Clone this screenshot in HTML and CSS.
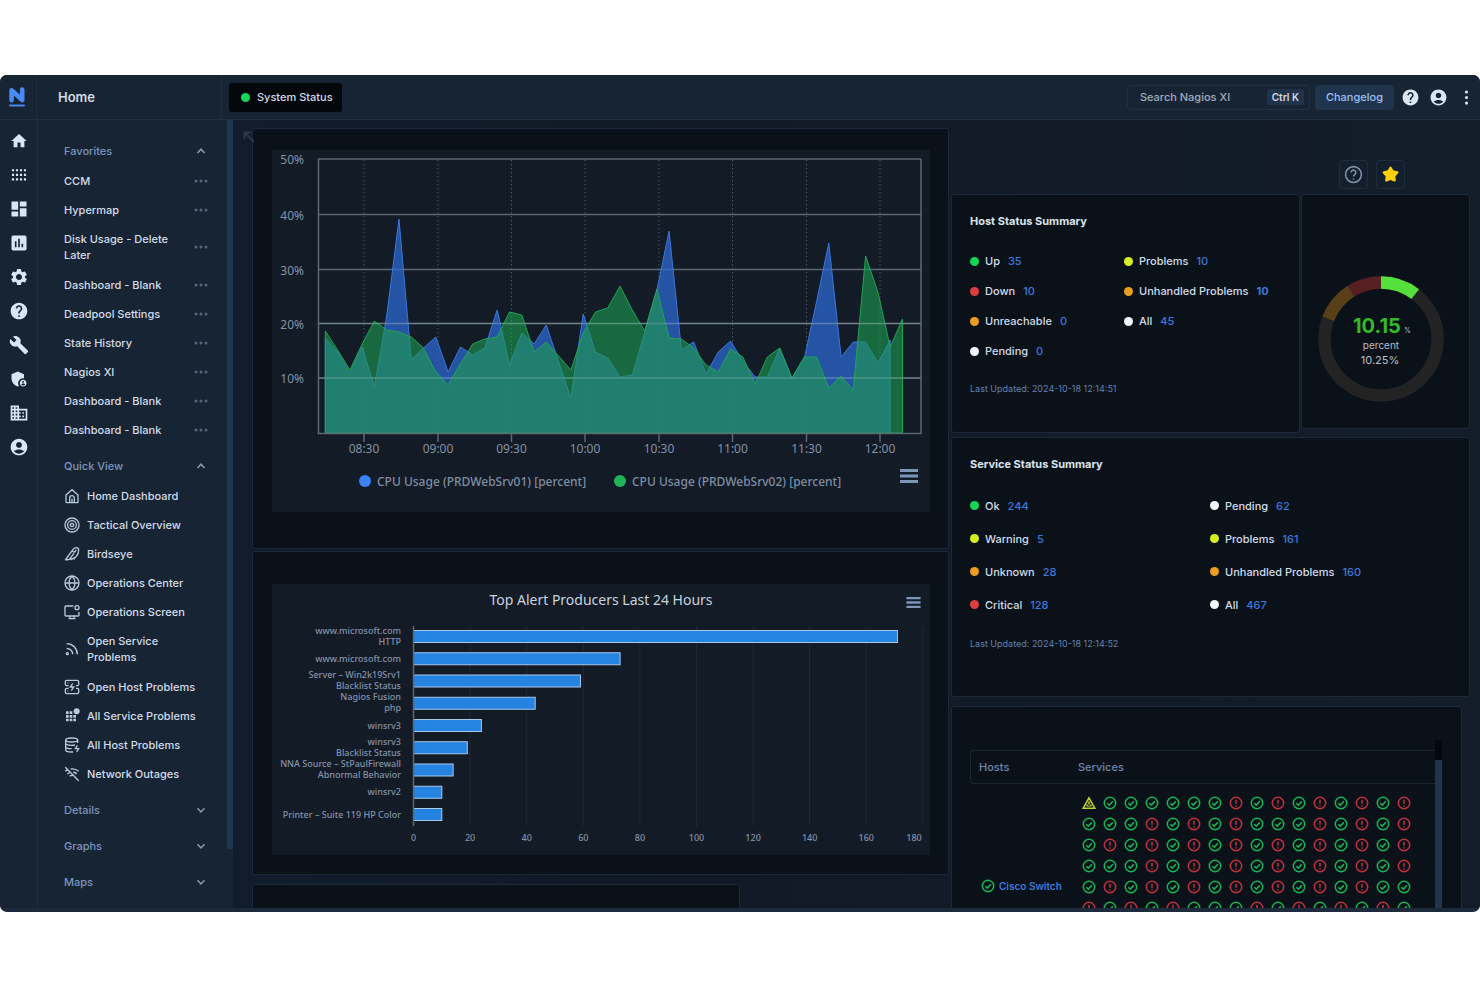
FILE: index.html
```html
<!DOCTYPE html>
<html lang="en">
<head>
<meta charset="utf-8">
<title>Nagios XI - Home</title>
<link rel="stylesheet" href="styles.css">
</head>
<body>
<svg class="sprite" aria-hidden="true">
  <symbol id="i-home" viewBox="-1 -1 26 26"><path d="M10 20v-6h4v6h5v-8h3L12 3 2 12h3v8z"/></symbol>
  <symbol id="i-apps" viewBox="0 0 24 24"><path d="M3.500 5h2.600v2.600H3.500zM8.300 5h2.600v2.600H8.300zM13.100 5h2.600v2.600h-2.600zM17.900 5h2.600v2.600h-2.600zM3.500 10.500h2.600v2.600H3.500zM8.300 10.500h2.600v2.600H8.300zM13.100 10.500h2.600v2.600h-2.600zM17.900 10.500h2.600v2.600h-2.600zM3.500 16h2.600v2.600H3.500zM8.300 16h2.600v2.600H8.300zM13.100 16h2.600v2.600h-2.600zM17.900 16h2.600v2.600h-2.600z"/></symbol>
  <symbol id="i-dashboard" viewBox="0 0 24 24"><path d="M3 13h8V3H3v10zm0 8h8v-6H3v6zm10 0h8V11h-8v10zm0-18v6h8V3h-8z"/></symbol>
  <symbol id="i-chart" viewBox="0 0 24 24"><path d="M19 3H5c-1.100 0-2 .9-2 2v14c0 1.100.9 2 2 2h14c1.100 0 2-.9 2-2V5c0-1.100-.9-2-2-2zM9 17H7v-7h2v7zm4 0h-2V7h2v10zm4 0h-2v-4h2v4z"/></symbol>
  <symbol id="i-gear" viewBox="0 0 24 24"><path d="M19.14 12.94c.04-.3.06-.61.06-.94 0-.32-.02-.64-.07-.94l2.03-1.58c.18-.14.23-.41.12-.61l-1.92-3.32c-.12-.22-.37-.29-.59-.22l-2.39.96c-.5-.38-1.03-.7-1.62-.94l-.36-2.54c-.04-.24-.24-.41-.48-.41h-3.84c-.24 0-.43.17-.47.41l-.36 2.54c-.59.24-1.13.57-1.62.94l-2.39-.96c-.22-.08-.47 0-.59.22L2.74 8.870c-.12.21-.08.47.12.61l2.03 1.580c-.05.3-.09.63-.09.94s.02.64.07.94l-2.03 1.580c-.18.14-.23.41-.12.61l1.920 3.320c.12.22.37.29.59.22l2.390-.96c.5.38 1.030.7 1.620.94l.36 2.540c.05.24.24.41.48.41h3.840c.24 0 .44-.17.47-.41l.36-2.540c.59-.24 1.130-.56 1.620-.94l2.390.96c.22.08.47 0 .59-.22l1.920-3.320c.12-.22.07-.47-.12-.61l-2.010-1.580zM12 15.600c-1.980 0-3.600-1.620-3.600-3.600s1.620-3.600 3.600-3.600 3.600 1.620 3.600 3.600-1.620 3.600-3.600 3.600z"/></symbol>
  <symbol id="i-help" viewBox="0 0 24 24"><path d="M12 2C6.480 2 2 6.480 2 12s4.480 10 10 10 10-4.480 10-10S17.520 2 12 2zm1 17h-2v-2h2v2zm2.070-7.750l-.9.92C13.450 12.900 13 13.500 13 15h-2v-.5c0-1.100.45-2.100 1.170-2.830l1.240-1.260c.37-.36.59-.86.59-1.410 0-1.100-.9-2-2-2s-2 .9-2 2H8c0-2.210 1.790-4 4-4s4 1.790 4 4c0 .88-.36 1.680-.93 2.250z"/></symbol>
  <symbol id="i-wrench" viewBox="0 0 24 24"><path d="M22.700 19l-9.100-9.100c.9-2.300.4-5-1.500-6.900-2-2-5-2.400-7.400-1.300L9 6 6 9 1.600 4.700C.4 7.100.9 10.100 2.900 12.100c1.900 1.900 4.600 2.400 6.900 1.500l9.100 9.100c.4.4 1 .4 1.400 0l2.300-2.300c.5-.4.5-1.100.1-1.400z"/></symbol>
  <symbol id="i-shield" viewBox="0 0 24 24"><path d="M17 11c.34 0 .67.04 1 .09V6.270L10.500 3 3 6.270v4.910c0 4.540 3.200 8.790 7.500 9.820.55-.13 1.080-.32 1.600-.55-.69-.98-1.100-2.170-1.100-3.450 0-3.310 2.690-6 6-6z"/><path fill-rule="evenodd" d="M17 13c-2.210 0-4 1.790-4 4s1.790 4 4 4 4-1.790 4-4-1.790-4-4-4zm0 1.380c.62 0 1.120.51 1.120 1.120s-.51 1.120-1.120 1.120-1.120-.51-1.120-1.120.5-1.120 1.120-1.120zm0 5.370c-.93 0-1.740-.46-2.240-1.170.05-.72 1.510-1.080 2.240-1.080s2.190.36 2.240 1.080c-.5.71-1.310 1.170-2.240 1.170z"/></symbol>
  <symbol id="i-building" viewBox="0 0 24 24"><path d="M12 7V3H2v18h20V7H12zM6 19H4v-2h2v2zm0-4H4v-2h2v2zm0-4H4V9h2v2zm0-4H4V5h2v2zm4 12H8v-2h2v2zm0-4H8v-2h2v2zm0-4H8V9h2v2zm0-4H8V5h2v2zm10 12h-8v-2h2v-2h-2v-2h2v-2h-2V9h8v10zm-2-8h-2v2h2v-2zm0 4h-2v2h2v-2z"/></symbol>
  <symbol id="i-user" viewBox="0 0 24 24"><path d="M12 2C6.480 2 2 6.480 2 12s4.480 10 10 10 10-4.480 10-10S17.520 2 12 2zm0 4c1.930 0 3.500 1.570 3.500 3.500S13.930 13 12 13s-3.500-1.570-3.500-3.500S10.070 6 12 6zm0 14c-2.030 0-4.430-.82-6.140-2.880C7.550 15.800 9.680 15 12 15s4.450.8 6.140 2.120C16.430 19.180 14.030 20 12 20z"/></symbol>
  <symbol id="i-more" viewBox="0 0 24 24"><circle cx="12" cy="5" r="2"/><circle cx="12" cy="12" r="2"/><circle cx="12" cy="19" r="2"/></symbol>
  <symbol id="i-dots" viewBox="0 0 14 4"><circle cx="2" cy="2" r="1.500"/><circle cx="7" cy="2" r="1.500"/><circle cx="12" cy="2" r="1.500"/></symbol>
  <symbol id="i-up" viewBox="0 0 10 10"><path d="M1.500 7 5 3.200 8.500 7"/></symbol>
  <symbol id="i-down" viewBox="0 0 10 10"><path d="M1.500 3.200 5 7 8.500 3.200"/></symbol>
  <symbol id="i-house" viewBox="0 0 24 24"><path d="M3 10.500 12 2.500l9 8V21a1 1 0 0 1-1 1H4a1 1 0 0 1-1-1zM8.500 22v-7a3.500 3.500 0 0 1 7 0v7M12 22v-6"/></symbol>
  <symbol id="i-target" viewBox="0 0 24 24"><circle cx="12" cy="12" r="10.500"/><circle cx="12" cy="12" r="6.500"/><circle cx="12" cy="12" r="2.500"/></symbol>
  <symbol id="i-bird" viewBox="0 0 24 24"><path d="M2 21 12.500 6.500C14 4 16 2.500 18.500 2.500c2.500 0 3.500 2 3.500 4C22 14 16 20 8 20M2 21l6-1 7-9M11 21l2-2.500M15 20l1.500-3M12.500 6.500c1 4 5 3 5.500-1"/></symbol>
  <symbol id="i-globe" viewBox="0 0 24 24"><circle cx="12" cy="12" r="10.500"/><path d="M1.500 12h21M12 1.500c-6 6-6 15 0 21M12 1.500c6 6 6 15 0 21"/></symbol>
  <symbol id="i-screen" viewBox="0 0 24 24"><path d="M14 3H3a1.500 1.500 0 0 0-1.500 1.500v12A1.500 1.500 0 0 0 3 18h18a1.500 1.500 0 0 0 1.500-1.500V12M7 22h10M9 18v4M15 18v4"/><circle cx="19.500" cy="5.500" r="3"/></symbol>
  <symbol id="i-rss" viewBox="0 0 24 24"><circle cx="5" cy="19" r="1.500"/><path d="M4 11a9 9 0 0 1 9 9M4 4a16 16 0 0 1 16 16"/></symbol>
  <symbol id="i-hostbolt" viewBox="0 0 24 24"><path d="M7 10H4a2 2 0 0 1-2-2V4a2 2 0 0 1 2-2h16a2 2 0 0 1 2 2v4a2 2 0 0 1-2 2h-2M7 14H4a2 2 0 0 0-2 2v4a2 2 0 0 0 2 2h16a2 2 0 0 0 2-2v-4a2 2 0 0 0-2-2h-2M13 6.500 9.500 12h5L11 17.500M5.500 6h1M5.500 18h1"/></symbol>
  <symbol id="i-gridalert" viewBox="0 0 24 24"><g fill="currentColor" stroke="none"><path d="M3 5h4v4H3zM8.500 5h4v4h-4zM3 10.500h4v4H3zM8.500 10.500h4v4h-4zM14 10.500h4v4h-4zM3 16h4v4H3zM8.500 16h4v4h-4zM14 16h4v4h-4z"/><circle cx="19" cy="5" r="4.500"/></g></symbol>
  <symbol id="i-dbbolt" viewBox="0 0 24 24"><ellipse cx="11.500" cy="4.500" rx="9" ry="3"/><path d="M2.500 4.500v15c0 1.700 4 3 9 3h2M20.500 4.500V9M2.500 9.500c0 1.700 4 3 9 3 2 0 3.500 0 5-.5M2.500 14.500c0 1.700 4 3 9 3M20 12.500 17 17.500h5l-3 5"/></symbol>
  <symbol id="i-wifioff" viewBox="0 0 24 24"><path d="M2 2l20 20M12 19h.01M8.500 15.500a5 5 0 0 1 5-1.300M5 12a10 10 0 0 1 4.500-2.500M2 8a15 15 0 0 1 3.500-2.500M10 4.500A15 15 0 0 1 22 8M14 9a10 10 0 0 1 5 3"/></symbol>
  <symbol id="i-ok" viewBox="0 0 14 14"><circle cx="7" cy="7" r="5.700"/><path d="M4.300 7.200 6.300 9.100 9.900 5.200"/></symbol>
  <symbol id="i-bad" viewBox="0 0 14 14"><circle cx="7" cy="7" r="5.700"/><path d="M7 3.800v4M7 9.200v1.200"/></symbol>
  <symbol id="i-warn" viewBox="0 0 14 14"><path d="M7 1.800 12.900 12.300H1.100zM7 5.200v3.200M7 9.600v1.200M5.200 8.500v2M8.800 8.500v2"/></symbol>
  <symbol id="i-burger" viewBox="0 0 18 14"><path d="M0 0h18v3H0zM0 5.500h18v3H0zM0 11h18v3H0z"/></symbol>
</svg>

<div class="app">
  <header class="topbar">
    <a class="brand" href="#" aria-label="Nagios">
      <svg width="18" height="20" viewBox="0 0 18 20"><path d="M3.600 13.200V3.200L14.200 13V2.500" fill="none" stroke="#4a8af4" stroke-width="4.600" stroke-linejoin="round" stroke-linecap="round"/><path d="M2 18.500h14" stroke="#4a8af4" stroke-width="1.800" stroke-linecap="round"/></svg>
    </a>
    <h1 class="page-name">Home</h1>
    <button class="system-status" type="button"><span class="dot green"></span>System Status</button>
    <div class="top-actions">
      <label class="search"><input type="text" placeholder="Search Nagios XI" aria-label="Search Nagios XI"><kbd>Ctrl K</kbd></label>
      <button class="changelog" type="button">Changelog</button>
      <button class="icon-btn" type="button" aria-label="Help"><svg><use href="#i-help"/></svg></button>
      <button class="icon-btn" type="button" aria-label="Account"><svg><use href="#i-user"/></svg></button>
      <button class="icon-btn" type="button" aria-label="More"><svg><use href="#i-more"/></svg></button>
    </div>
  </header>

  <div class="body">
    <nav class="rail" aria-label="Main">
      <a href="#" aria-label="Home"><svg><use href="#i-home"/></svg></a>
      <a href="#" aria-label="Views"><svg><use href="#i-apps"/></svg></a>
      <a href="#" aria-label="Dashboards"><svg><use href="#i-dashboard"/></svg></a>
      <a href="#" aria-label="Reports"><svg><use href="#i-chart"/></svg></a>
      <a href="#" aria-label="Configure"><svg><use href="#i-gear"/></svg></a>
      <a href="#" aria-label="Help"><svg><use href="#i-help"/></svg></a>
      <a href="#" aria-label="Tools"><svg><use href="#i-wrench"/></svg></a>
      <a href="#" aria-label="Admin"><svg><use href="#i-shield"/></svg></a>
      <a href="#" aria-label="Enterprise"><svg><use href="#i-building"/></svg></a>
      <a href="#" aria-label="Account"><svg><use href="#i-user"/></svg></a>
    </nav>

    <aside class="sidebar">
      <div class="menu">
        <button class="section" type="button">Favorites<svg><use href="#i-up"/></svg></button>
        <ul class="favorites">
          <li><a href="#">CCM</a><svg><use href="#i-dots"/></svg></li>
          <li><a href="#">Hypermap</a><svg><use href="#i-dots"/></svg></li>
          <li class="tall"><a href="#">Disk Usage - Delete Later</a><svg><use href="#i-dots"/></svg></li>
          <li><a href="#">Dashboard - Blank</a><svg><use href="#i-dots"/></svg></li>
          <li><a href="#">Deadpool Settings</a><svg><use href="#i-dots"/></svg></li>
          <li><a href="#">State History</a><svg><use href="#i-dots"/></svg></li>
          <li><a href="#">Nagios XI</a><svg><use href="#i-dots"/></svg></li>
          <li><a href="#">Dashboard - Blank</a><svg><use href="#i-dots"/></svg></li>
          <li><a href="#">Dashboard - Blank</a><svg><use href="#i-dots"/></svg></li>
        </ul>
        <button class="section" type="button">Quick View<svg><use href="#i-up"/></svg></button>
        <ul class="quick">
          <li><svg><use href="#i-house"/></svg><a href="#">Home Dashboard</a></li>
          <li><svg><use href="#i-target"/></svg><a href="#">Tactical Overview</a></li>
          <li><svg><use href="#i-bird"/></svg><a href="#">Birdseye</a></li>
          <li><svg><use href="#i-globe"/></svg><a href="#">Operations Center</a></li>
          <li><svg><use href="#i-screen"/></svg><a href="#">Operations Screen</a></li>
          <li class="tall"><svg><use href="#i-rss"/></svg><a href="#">Open Service<br>Problems</a></li>
          <li><svg><use href="#i-hostbolt"/></svg><a href="#">Open Host Problems</a></li>
          <li><svg><use href="#i-gridalert"/></svg><a href="#">All Service Problems</a></li>
          <li><svg><use href="#i-dbbolt"/></svg><a href="#">All Host Problems</a></li>
          <li><svg><use href="#i-wifioff"/></svg><a href="#">Network Outages</a></li>
        </ul>
        <button class="section" type="button">Details<svg><use href="#i-down"/></svg></button>
        <button class="section" type="button">Graphs<svg><use href="#i-down"/></svg></button>
        <button class="section" type="button">Maps<svg><use href="#i-down"/></svg></button>
      </div>
      <div class="side-scroll"><span></span></div>
    </aside>

    <main class="main">
      <svg class="resize" viewBox="0 0 12 12"><path d="M1.500 8V1.500H8M1.500 1.500 11 11"/></svg>
      <div class="col-left">
        <section class="panel cpu-panel">
          <svg class="chart" id="cpu" viewBox="272 150 658 362" role="img" aria-label="CPU usage">
            <g id="cpu-grid"></g>
            <path id="cpu-blue" class="area-blue"/>
            <path id="cpu-green" class="area-green"/>
            <g id="cpu-over"></g>
            <g id="cpu-labels" class="axis"></g>
            <circle cx="365" cy="481" r="6" fill="#3b82f6"/><text class="legend" x="377" y="486">CPU Usage (PRDWebSrv01) [percent]</text>
            <circle cx="620" cy="481" r="6" fill="#22b25a"/><text class="legend" x="632" y="486">CPU Usage (PRDWebSrv02) [percent]</text>
            <use href="#i-burger" x="900" y="469" width="18" height="14" class="burger"/>
          </svg>
        </section>
        <section class="panel alerts-panel">
          <svg class="chart" viewBox="272 584 658 271" role="img" aria-label="Top Alert Producers Last 24 Hours">
            <text class="chart-title" x="601" y="605">Top Alert Producers Last 24 Hours</text>
            <use href="#i-burger" x="906" y="597" width="15" height="11" class="burger"/>
            <g id="bars"></g>
          </svg>
        </section>
        <section class="panel empty-panel"></section>
      </div>

      <div class="col-right">
        <div class="tools">
          <button type="button" aria-label="Help"><svg viewBox="0 0 24 24" class="tool-help"><circle cx="12" cy="12" r="10"/><path d="M9 9.500a3 3 0 1 1 4.800 2.400c-1.100.8-1.800 1.400-1.800 2.600M12 17v1.500"/></svg></button>
          <button type="button" aria-label="Favorite"><svg viewBox="0 0 24 24" class="tool-star"><path d="M12 3.500l2.800 4.700 5.700 1.300-3.900 4.300.6 5.700L12 17.300l-5.200 2.200.6-5.700-3.900-4.300 5.700-1.300z"/></svg></button>
        </div>
        <div class="summary-row">
          <section class="panel summary host">
            <h2>Host Status Summary</h2>
            <ul>
              <li><span class="dot green"></span>Up<a href="#">35</a></li>
              <li><span class="dot red"></span>Down<a href="#">10</a></li>
              <li><span class="dot orange"></span>Unreachable<a href="#">0</a></li>
              <li><span class="dot white"></span>Pending<a href="#">0</a></li>
              <li><span class="dot yellow"></span>Problems<a href="#">10</a></li>
              <li><span class="dot orange"></span>Unhandled Problems<a class="strong" href="#">10</a></li>
              <li><span class="dot white"></span>All<a href="#">45</a></li>
            </ul>
            <p>Last Updated: 2024-10-18 12:14:51</p>
          </section>
          <section class="panel gauge">
            <svg viewBox="-64 -64 128 128" role="img" aria-label="10.15 percent">
              <g fill="none" stroke-width="12.500">
                <circle r="56.500" stroke="#222322"/>
                <path d="M-52.700 -20.200A56.500 56.500 0 0 1 -29.900 -47.900" stroke="#583f18"/>
                <path d="M-29.900 -47.900A56.500 56.500 0 0 1 0 -56.500" stroke="#571f22"/>
                <path d="M0 -56.500A56.500 56.500 0 0 1 34.200 -44.900" stroke="#55e13c"/>
              </g>
              <text class="g-value" x="-28" y="-6">10.15</text><text class="g-unit" x="23" y="-6">%</text>
              <text class="g-text" x="0" y="10">percent</text>
              <text class="g-pct" x="-1" y="25">10.25%</text>
            </svg>
          </section>
        </div>
        <section class="panel summary service">
          <h2>Service Status Summary</h2>
          <ul>
            <li><span class="dot green"></span>Ok<a href="#">244</a></li>
            <li><span class="dot yellow"></span>Warning<a href="#">5</a></li>
            <li><span class="dot orange"></span>Unknown<a href="#">28</a></li>
            <li><span class="dot red"></span>Critical<a href="#">128</a></li>
            <li><span class="dot white"></span>Pending<a href="#">62</a></li>
            <li><span class="dot yellow"></span>Problems<a href="#">161</a></li>
            <li><span class="dot orange"></span>Unhandled Problems<a href="#">160</a></li>
            <li><span class="dot white"></span>All<a href="#">467</a></li>
          </ul>
          <p>Last Updated: 2024-10-18 12:14:52</p>
        </section>
        <section class="panel hosts-panel">
          <table>
            <thead><tr><th>Hosts</th><th>Services</th></tr></thead>
            <tbody><tr>
              <td class="host-cell"><a href="#"><svg class="ok"><use href="#i-ok"/></svg>Cisco Switch</a></td>
              <td><div id="services" class="services"></div></td>
            </tr></tbody>
          </table>
          <div class="table-scroll"><span></span></div>
        </section>
      </div>
    </main>
  </div>
</div>
<script src="app.js"></script>
</body>
</html>
```
FILE: styles.css
```css
* { box-sizing: border-box; }
body { margin: 0; padding: 75px 0; background: #fff; font-family: Inter, "Liberation Sans", sans-serif; font-size: 12px; line-height: 16px; color: #d3dce8; }
ul { list-style: none; margin: 0; padding: 0; }
a { color: inherit; text-decoration: none; }
button { font: inherit; color: inherit; border: 0; background: none; padding: 0; }
h1, h2, p { margin: 0; }
.sprite { position: absolute; width: 0; height: 0; }

.app { height: calc(100vh - 150px); min-height: 600px; display: flex; flex-direction: column; overflow: hidden; border-radius: 7px; background: #111a26; border-bottom: 4px solid #1c2a3b; }

/* top bar */
.topbar { flex: 0 0 45px; display: flex; align-items: center; background: #172434; border-bottom: 1px solid #223044; }
.brand { flex: 0 0 37px; align-self: stretch; display: flex; align-items: center; padding-left: 8px; border-right: 1px solid #1f2d3f; }
.page-name { flex: 0 0 185px; align-self: stretch; padding-left: 21px; font-size: 13px; font-weight: 600; line-height: 44px; border-right: 1px solid #1f2d3f; }
.system-status { display: flex; align-items: center; gap: 7px; height: 29px; margin-left: 7px; padding: 0 9px 0 12px; background: #04070b; border-radius: 3px; font-size: 11px; font-weight: 500; }
.top-actions { display: flex; align-items: center; margin-left: auto; padding-right: 4px; }
.search { display: flex; align-items: center; width: 183px; height: 25px; padding: 0 5px 0 12px; border: 1px solid #213044; border-radius: 4px; }
.search input { flex: 1; min-width: 0; padding: 0; border: 0; background: none; font: inherit; font-size: 11px; font-weight: 500; color: #a9b5c4; outline: 0; }
.search input::placeholder { color: #a0acbc; opacity: 1; }
.search kbd { padding: 0 5px; border-radius: 3px; background: #21324a; font: inherit; font-size: 10px; font-weight: 600; }
.changelog { height: 25px; margin: 0 2px 0 5px; padding: 0 11px; border-radius: 4px; background: #21344e; color: #9cc0f2; font-size: 11px; font-weight: 500; }
.icon-btn { width: 28px; display: grid; place-items: center; }
.icon-btn svg, .rail svg { width: 20px; height: 20px; fill: #dbe6f3; }
.icon-btn svg { width: 19px; height: 19px; }
.icon-btn:last-child { width: 20px; margin-left: 4px; }

.body { flex: 1; min-height: 0; display: flex; }

/* icon rail */
.rail { flex: 0 0 38px; display: flex; flex-direction: column; align-items: center; gap: 14px; padding-top: 11px; background: #172434; border-right: 1px solid #1f2d3f; }
.rail a { display: block; height: 20px; }

/* sidebar */
.sidebar { flex: 0 0 195px; display: flex; overflow: hidden; background: #172434; }
.menu { flex: 1; padding: 13px 19px 0 26px; font-size: 11px; font-weight: 500; }
.section { display: flex; align-items: center; justify-content: space-between; width: 100%; height: 36px; color: #7d95bb; text-align: left; }
.section svg { width: 10px; height: 10px; margin-right: 2px; fill: none; stroke: #8b9bb0; stroke-width: 1.500; }
.menu li { display: flex; align-items: center; min-height: 29px; padding: 6px 0; line-height: 16px; }
.menu li.tall { padding: 7px 0; }
.favorites { margin: -3px 0 4px; }
.favorites a { flex: 1; padding-right: 20px; }
.favorites svg { width: 14px; height: 4px; fill: #56677d; }
.quick { margin: -3px 0 4px; }
.quick li { gap: 7px; }
.quick svg { flex: 0 0 16px; height: 16px; fill: none; stroke: #b9c9de; stroke-width: 2; color: #b9c9de; }
.side-scroll { flex: 0 0 6px; }
.side-scroll span { display: block; height: calc(100% - 59px); background: #203750; }

/* dashboard */
.main { flex: 1; min-width: 0; position: relative; display: flex; gap: 2px; padding: 0 10px 0 19px; background: linear-gradient(90deg, #111c2c, #111a26 40%, #131c29); overflow: hidden; }
.resize { position: absolute; left: 10px; top: 11px; width: 12px; height: 12px; fill: none; stroke: #2a374b; stroke-width: 2; }
.col-left { flex: 697 1 0; min-width: 0; padding-top: 8px; display: flex; flex-direction: column; gap: 2px; }
.col-right { flex: 519 1 0; min-width: 0; display: flex; flex-direction: column; }
.panel { flex: none; background: #0a1119; border: 1px solid #1c293a; border-radius: 3px; }
.chart { display: block; width: 100%; background: #121b26; font-family: "Noto Sans", sans-serif; }
.cpu-panel { padding: 21px 18px 36px 19px; }
.alerts-panel { padding: 32px 18px 19px 19px; }
.empty-panel { width: 70%; height: 60px; margin-top: 7px; }
.axis text { font-size: 12px; fill: #8492a6; }
.legend { font-size: 12px; font-weight: 500; fill: #7f8da3; }
.burger { fill: #7f95b5; }
.chart-title { font-size: 14px; fill: #c9d2dd; text-anchor: middle; }
.bar { fill: #2583e2; stroke: #a8c8ea; stroke-width: 1; }
.bar-label { font-size: 9px; font-weight: 500; fill: #8492ab; text-anchor: end; }
.tick { font-size: 9px; font-weight: 500; fill: #8492ab; text-anchor: middle; }
.area-blue { fill: #2d68cf; fill-opacity: 0.750; stroke: #3977dc; }
.area-green { fill: #1f9950; fill-opacity: 0.620; stroke: #22a356; }
.grid-line { stroke: #5d6874; stroke-width: 1.500; }
.grid-over { stroke: #8fb0b0; stroke-opacity: 0.350; stroke-width: 1.500; }
.grid-dot { stroke: #4a5663; stroke-dasharray: 1.500 2.500; }
.bar-grid { stroke: #1f2a38; }

.tools { display: flex; justify-content: flex-end; gap: 8px; padding: 40px 65px 5px 0; }
.tools button { display: grid; place-items: center; width: 29px; height: 29px; border: 1px solid #1f2c3e; border-radius: 3px; background: #141f2d; }
.tools svg { width: 19px; height: 19px; }
.tool-help { fill: none; stroke: #7f8fa8; stroke-width: 2; }
.tool-star { fill: #ffcf0a; stroke: #ffcf0a; stroke-width: 3; stroke-linejoin: round; }

.summary-row { display: grid; grid-template-columns: 349fr 169fr; align-items: start; gap: 1px; }
.gauge { display: flex; justify-content: center; padding: 80px 0 25px; }
.gauge svg { width: 128px; height: 128px; margin-left: -9px; }
.summary { padding: 18px 18px 0; }
.summary h2 { font-size: 11px; font-weight: 700; color: #dbe3ec; }
.summary ul { display: grid; grid-auto-flow: column; justify-content: start; }
.summary li { display: flex; align-items: center; font-size: 11px; font-weight: 500; }
.summary li .dot { margin-right: 6px; }
.summary li a { margin-left: 8px; color: #3f78dc; }
.summary li .strong { font-weight: 700; }
.summary p { font-size: 9px; color: #6480b0; }
.host ul { margin: 17px 0 15px; grid-template: repeat(4, 30px) / 154px auto; }
.host { height: 239px; }
.service { height: 260px; margin-top: 4px; }
.service ul { margin: 17px 0 15px; grid-template: repeat(4, 33px) / 240px auto; }
.dot { width: 9px; height: 9px; border-radius: 50%; }
.green { background: #12d658; }
.red { background: #d93f40; }
.orange { background: #eb9c21; }
.yellow { background: #d8f022; }
.white { background: #f2f5fa; }
.g-value { font-size: 20px; font-weight: 700; fill: #34b927; }
.g-unit { font-size: 7px; fill: #b9bfc6; }
.g-text { font-size: 10px; fill: #b9bfc6; text-anchor: middle; }
.g-pct { font-size: 11px; fill: #b9bfc6; text-anchor: middle; }

.hosts-panel { display: flex; align-items: flex-start; height: 260px; margin: 9px 8px 0 0; padding: 33px 19px 0 18px; }
table { flex: 1; margin-top: 10px; border-collapse: separate; border-spacing: 0; }
th { height: 34px; padding: 0 0 0 8px; border: 1px solid #1c2733; border-width: 1px 0; text-align: left; font-size: 11px; font-weight: 500; color: #6f86ad; }
th:first-child { width: 100px; border-left-width: 1px; border-radius: 4px 0 0 4px; }
td { padding: 8px 0 0 8px; }
.host-cell { padding: 0 0 22px 11px; vertical-align: bottom; font-size: 10px; font-weight: 600; color: #3f78dc; }
.host-cell a { display: flex; align-items: center; gap: 4px; height: 20px; }
.services { display: grid; grid-template-columns: repeat(16, 21px); grid-auto-rows: 21px; }
.services svg, .host-cell svg { width: 14px; height: 14px; fill: none; stroke-width: 1.500; place-self: center; }
.ok { stroke: #19b455; }
.bad { stroke: #c23140; }
.warn { stroke: #bfd02c; }
.table-scroll { flex: 0 0 7px; height: 220px; padding-top: 20px; background: #04070c; }
.table-scroll span { display: block; height: 200px; background: #22344c; }
```
FILE: app.js
```js
const el = (id) => document.getElementById(id);

// CPU usage, one sample every five minutes (plot y positions)
const blue = [338, 352, 373, 347, 387, 316, 219, 360, 348, 337, 372, 347, 355, 348, 310, 365, 333, 344, 325, 362, 398, 314, 352, 358, 377, 375, 333, 290, 231, 350, 342, 374, 352, 341, 361, 377, 377, 348, 378, 359, 302, 243, 357, 342, 342, 363, 340];
const green = [331, 350, 370, 344, 321, 330, 332, 337, 348, 372, 385, 364, 344, 339, 337, 312, 315, 352, 342, 356, 370, 333, 312, 308, 286, 310, 331, 289, 338, 339, 348, 365, 372, 349, 357, 384, 357, 348, 378, 357, 357, 388, 376, 390, 256, 292, 347, 319];
const area = (ys) => {
  const x = (i) => (325.3 + 12.28 * i).toFixed(1);
  return `M${x(0)} 433` + ys.map((y, i) => `L${x(i)} ${y}`).join('') + `L${x(ys.length - 1)} 433Z`;
};
el('cpu-blue').setAttribute('d', area(blue));
el('cpu-green').setAttribute('d', area(green));

const rows = [[159, '50%'], [214.5, '40%'], [269.5, '30%'], [323.5, '20%'], [378, '10%']];
const times = [[364, '08:30'], [438, '09:00'], [511.5, '09:30'], [585, '10:00'], [659, '10:30'], [732.5, '11:00'], [806.5, '11:30'], [880, '12:00']];
el('cpu-grid').innerHTML =
  rows.map(([y]) => `<path class="grid-line" d="M318 ${y}H921"/>`).join('') +
  times.map(([x]) => `<path class="grid-dot" d="M${x} 160V433"/>`).join('');
el('cpu-over').innerHTML =
  rows.slice(3).map(([y]) => `<path class="grid-over" d="M318 ${y}H921"/>`).join('') +
  '<path class="grid-line" fill="none" d="M318.500 159V433.500H921V159"/>' +
  times.map(([x]) => `<path class="grid-line" d="M${x} 433V442"/>`).join('');
el('cpu-labels').innerHTML =
  rows.map(([y, t]) => `<text x="304" y="${y + 5}" text-anchor="end">${t}</text>`).join('') +
  times.map(([x, t]) => `<text x="${x}" y="453" text-anchor="middle">${t}</text>`).join('');

// Top alert producers
const producers = [
  [171, 'www.microsoft.com', 'HTTP'], [73, 'www.microsoft.com'],
  [59, 'Server – Win2k19Srv1', 'Blacklist Status'], [43, 'Nagios Fusion', 'php'],
  [24, 'winsrv3'], [19, 'winsrv3', 'Blacklist Status'],
  [14, 'NNA Source – StPaulFirewall', 'Abnormal Behavior'],
  [10, 'winsrv2'], [10, 'Printer – Suite 119 HP Color']
];
let bars = '';
for (let v = 20; v <= 180; v += 20) bars += `<path class="bar-grid" d="M${413.5 + v * 2.83} 627V826"/>`;
producers.forEach(([v, a, b], i) => {
  const y = 636.5 + i * 22.25;
  bars += `<rect class="bar" x="413.5" y="${y - 6}" width="${v * 2.83}" height="12"/>`;
  bars += b
    ? `<text class="bar-label" x="401" y="${y - 3}">${a}</text><text class="bar-label" x="401" y="${y + 8}">${b}</text>`
    : `<text class="bar-label" x="401" y="${y + 3}">${a}</text>`;
});
bars += '<path class="grid-line" d="M413.500 626V826"/>';
for (let v = 0; v <= 180; v += 20) bars += `<text class="tick" x="${Math.min(413.5 + v * 2.83, 914)}" y="841">${v}</text>`;
el('bars').innerHTML = bars;

// Service states: w = warning, g = ok, r = critical
const states = 'wggggggrgrgrgrgr' + 'gggrgrgrgggrgrgr' + 'grgrgrgrgrgrgrgr' + 'gggrgrgrgrgrgrgr' + 'grgrgrgrgrgrgrgg' + 'rgrgrgggrgrgrgrg';
const kinds = { w: 'warn', g: 'ok', r: 'bad' };
el('services').innerHTML = [...states].map((s) => `<svg class="${kinds[s]}"><use href="#i-${kinds[s]}"/></svg>`).join('');
```
